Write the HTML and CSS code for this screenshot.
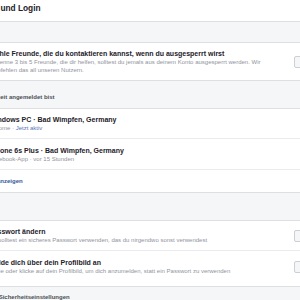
FILE: index.html
```html
<!DOCTYPE html>
<html lang="de">
<head>
    <meta charset="UTF-8">
    <meta name="viewport" content="width=device-width, initial-scale=1.0">
    <title>Sicherheit und Login</title>
    <link rel="stylesheet" href="styles.css">
</head>
<body>
    <div class="page">
        <header class="page-head">
            <h1>Sicherheit und Login</h1>
        </header>

        <section class="section">
            <div class="section-head"></div>
            <div class="card">
                <div class="row">
                    <span class="icon"></span>
                    <div class="text">
                        <div class="title">Wähle Freunde, die du kontaktieren kannst, wenn du ausgesperrt wirst</div>
                        <div class="sub">Benenne 3 bis 5 Freunde, die dir helfen, solltest du jemals aus deinem Konto ausgesperrt werden. Wir empfehlen das all unseren Nutzern.</div>
                    </div>
                    <button class="btn" aria-label="Bearbeiten"></button>
                </div>
            </div>
        </section>

        <section class="section">
            <div class="section-head">Wo du derzeit angemeldet bist</div>
            <div class="card">
                <div class="row">
                    <span class="icon"></span>
                    <div class="text">
                        <div class="title">Windows PC · Bad Wimpfen, Germany</div>
                        <div class="sub">Chrome · <span class="active">Jetzt aktiv</span></div>
                    </div>
                </div>
                <div class="row">
                    <span class="icon"></span>
                    <div class="text">
                        <div class="title">iPhone 6s Plus · Bad Wimpfen, Germany</div>
                        <div class="sub">Facebook-App · vor 15 Stunden</div>
                    </div>
                </div>
                <div class="row more">
                    <a href="#" class="link">Mehr anzeigen</a>
                </div>
            </div>
        </section>

        <section class="section">
            <div class="section-head"></div>
            <div class="card">
                <div class="row">
                    <span class="icon"></span>
                    <div class="text">
                        <div class="title">Passwort ändern</div>
                        <div class="sub">Du solltest ein sicheres Passwort verwenden, das du nirgendwo sonst verwendest</div>
                    </div>
                    <button class="btn" aria-label="Bearbeiten"></button>
                </div>
                <div class="row tall">
                    <span class="icon"></span>
                    <div class="text">
                        <div class="title">Melde dich über dein Profilbild an</div>
                        <div class="sub">Tippe oder klicke auf dein Profilbild, um dich anzumelden, statt ein Passwort zu verwenden</div>
                    </div>
                    <button class="btn" aria-label="Bearbeiten"></button>
                </div>
            </div>
        </section>

        <section class="section tight">
            <div class="section-head">Erweiterte Sicherheitseinstellungen</div>
        </section>
    </div>
</body>
</html>
```

FILE: styles.css
```css
html, body {
    margin: 0;
    padding: 0;
    overflow: hidden;
}

body {
    background: #f5f6f7;
    font-family: "Liberation Sans", Arial, sans-serif;
    color: #1d2129;
}

.page {
    margin-left: -50px;
    width: 396px;
}

.page-head {
    background: #fff;
    height: 22px;
    box-sizing: border-box;
    border-bottom: 1px solid #dddfe2;
    padding-left: 8px;
}

.page-head h1 {
    margin: 0;
    font-size: 8.3px;
    line-height: 16px;
    font-weight: bold;
}

.section + .section {
    margin-top: 7px;
}

.section.tight {
    margin-top: 1px;
}

.section-head {
    height: 20px;
    line-height: 19px;
    padding-left: 18px;
    font-size: 6px;
    font-weight: bold;
    color: #4b4f56;
}

.card {
    background: #fff;
    border-top: 1px solid #dddfe2;
    border-bottom: 1px solid #dddfe2;
}

.row {
    display: flex;
    align-items: center;
    gap: 7px;
    padding: 7px 12px 6px 18px;
    border-top: 1px solid #e9ebee;
}

.row:first-child {
    border-top: 0;
    padding-top: 6px;
}

.row.tall {
    padding-bottom: 11px;
}

.icon {
    width: 14px;
    height: 14px;
    flex: none;
}

.text {
    flex: 1;
    min-width: 0;
    margin-right: 5px;
}

.title {
    font-size: 7px;
    line-height: 9px;
    font-weight: bold;
}

.sub {
    font-size: 6px;
    line-height: 8px;
    color: #90949c;
}

.active {
    color: #5b74b8;
}

.row.more {
    padding-left: 31px;
}

.link {
    font-size: 6px;
    line-height: 9px;
    font-weight: bold;
    color: #365899;
    text-decoration: none;
}

.btn {
    flex: none;
    width: 40px;
    height: 12px;
    padding: 0;
    box-sizing: border-box;
    border: 1px solid #ccd0d5;
    border-radius: 2px;
    background: #f5f6f7;
}
```
